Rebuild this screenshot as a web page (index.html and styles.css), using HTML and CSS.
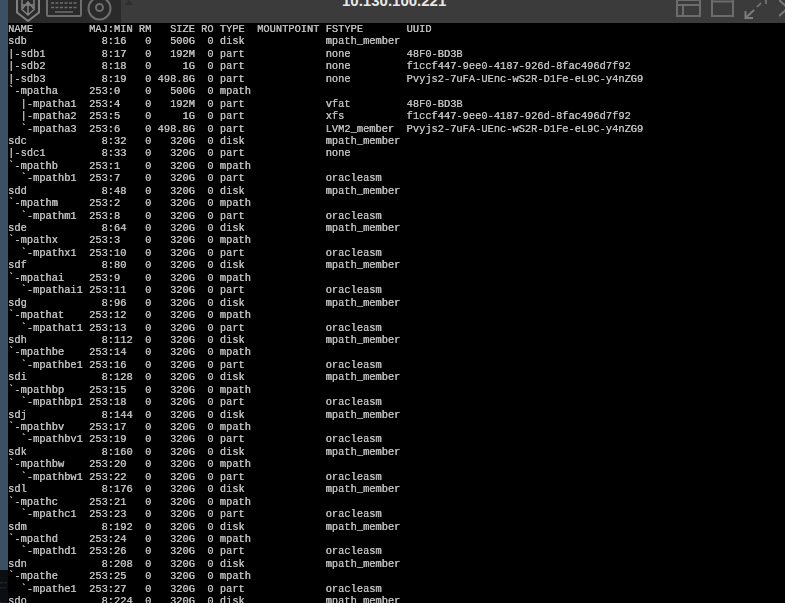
FILE: index.html
```html
<!DOCTYPE html>
<html lang="en">
<head>
<meta charset="utf-8">
<title>10.130.100.221</title>
<link rel="stylesheet" href="styles.css">
</head>
<body>
<div class="desktop">
  <aside class="strip">
    <div class="strip-fill"></div>
    <div class="strip-thumb"><span>::: ::</span><span>:: ::</span></div>
    <div class="strip-thumb"><span>:: ::</span></div>
  </aside>
  <main class="window">
    <header class="titlebar">
      <div class="tools">
        <svg class="icon" width="26" height="23" viewBox="0 0 26 23" fill="none" stroke="#808080" stroke-width="2"><path d="M2 -3V12.5L13 21L24 12.500V-3"/><path d="M7 -3V9.500L13 15L19 9.500V-3M7 9L13 2L19 9M7 5H19M13 2V15" stroke-width="1.500"/></svg>
        <svg class="icon" width="36" height="18" viewBox="0 0 36 18" fill="none" stroke="#6e6e6e"><rect x="1" y="-3" width="34" height="19" rx="1.500" stroke-width="2"/><path d="M5 3H31M5 7.500H31" stroke-dasharray="3 1.500" stroke-width="1.500"/><path d="M9 12H27" stroke-width="1.500"/></svg>
        <svg class="icon" width="25" height="23" viewBox="0 0 25 23" fill="none" stroke="#6e6e6e"><circle cx="12.500" cy="8.500" r="11" stroke-width="2"/><circle cx="12.500" cy="7.500" r="3.500" stroke-width="2"/></svg>
      </div>
      <div class="arrow"></div>
      <h1 class="title">10.130.100.221</h1>
      <div class="controls">
        <svg width="25" height="17" viewBox="0 0 25 17" fill="none" stroke="#6c6c6c" stroke-width="2"><path d="M1 -2V16H24V-2M1 5H24M7 5V16M1 0H24"/></svg>
        <svg width="23" height="17" viewBox="0 0 23 17" fill="none" stroke="#6c6c6c" stroke-width="2"><path d="M1 -2V16H22V-2M1 1.500H22"/></svg>
        <svg width="25" height="20" viewBox="0 0 25 20" fill="none" stroke="#7c7c7c" stroke-width="2"><path d="M1.500 18L10 10M1.500 11V18H9"/><path d="M13 7L17 3M20 0L22 -2M22 -1V4" stroke-width="1.500"/></svg>
        <svg width="12" height="20" viewBox="0 0 12 20" fill="none" stroke="#7c7c7c" stroke-width="2"><path d="M0 16L9 8M0 0L9 8"/></svg>
      </div>
    </header>
    <pre class="console">NAME         MAJ:MIN RM   SIZE RO TYPE  MOUNTPOINT FSTYPE       UUID
sdb            8:16   0   500G  0 disk             mpath_member
|-sdb1         8:17   0   192M  0 part             none         48F0-BD3B
|-sdb2         8:18   0     1G  0 part             none         f1ccf447-9ee0-4187-926d-8fac496d7f92
|-sdb3         8:19   0 498.8G  0 part             none         Pvyjs2-7uFA-UEnc-wS2R-D1Fe-eL9C-y4nZG9
`-mpatha     253:0    0   500G  0 mpath
  |-mpatha1  253:4    0   192M  0 part             vfat         48F0-BD3B
  |-mpatha2  253:5    0     1G  0 part             xfs          f1ccf447-9ee0-4187-926d-8fac496d7f92
  `-mpatha3  253:6    0 498.8G  0 part             LVM2_member  Pvyjs2-7uFA-UEnc-wS2R-D1Fe-eL9C-y4nZG9
sdc            8:32   0   320G  0 disk             mpath_member
|-sdc1         8:33   0   320G  0 part             none
`-mpathb     253:1    0   320G  0 mpath
  `-mpathb1  253:7    0   320G  0 part             oracleasm
sdd            8:48   0   320G  0 disk             mpath_member
`-mpathm     253:2    0   320G  0 mpath
  `-mpathm1  253:8    0   320G  0 part             oracleasm
sde            8:64   0   320G  0 disk             mpath_member
`-mpathx     253:3    0   320G  0 mpath
  `-mpathx1  253:10   0   320G  0 part             oracleasm
sdf            8:80   0   320G  0 disk             mpath_member
`-mpathai    253:9    0   320G  0 mpath
  `-mpathai1 253:11   0   320G  0 part             oracleasm
sdg            8:96   0   320G  0 disk             mpath_member
`-mpathat    253:12   0   320G  0 mpath
  `-mpathat1 253:13   0   320G  0 part             oracleasm
sdh            8:112  0   320G  0 disk             mpath_member
`-mpathbe    253:14   0   320G  0 mpath
  `-mpathbe1 253:16   0   320G  0 part             oracleasm
sdi            8:128  0   320G  0 disk             mpath_member
`-mpathbp    253:15   0   320G  0 mpath
  `-mpathbp1 253:18   0   320G  0 part             oracleasm
sdj            8:144  0   320G  0 disk             mpath_member
`-mpathbv    253:17   0   320G  0 mpath
  `-mpathbv1 253:19   0   320G  0 part             oracleasm
sdk            8:160  0   320G  0 disk             mpath_member
`-mpathbw    253:20   0   320G  0 mpath
  `-mpathbw1 253:22   0   320G  0 part             oracleasm
sdl            8:176  0   320G  0 disk             mpath_member
`-mpathc     253:21   0   320G  0 mpath
  `-mpathc1  253:23   0   320G  0 part             oracleasm
sdm            8:192  0   320G  0 disk             mpath_member
`-mpathd     253:24   0   320G  0 mpath
  `-mpathd1  253:26   0   320G  0 part             oracleasm
sdn            8:208  0   320G  0 disk             mpath_member
`-mpathe     253:25   0   320G  0 mpath
  `-mpathe1  253:27   0   320G  0 part             oracleasm
sdo            8:224  0   320G  0 disk             mpath_member</pre>
  </main>
</div>
</body>
</html>
```
FILE: styles.css
```css
html, body {
  margin: 0;
  height: 100%;
  background: #000;
  overflow: hidden;
}

.desktop {
  display: flex;
  height: 603px;
  overflow: hidden;
}

.strip {
  width: 8px;
  flex: none;
  display: flex;
  flex-direction: column;
  background: #0c0f12;
  overflow: hidden;
}

.strip-fill {
  height: 570px;
  background: #3b5062;
  flex: none;
}

.strip-thumb {
  display: flex;
  flex-direction: column;
  margin-top: 10px;
  font: 4px/5px "Liberation Sans", sans-serif;
  color: #8d9aa5;
  white-space: nowrap;
}

.window {
  flex: 1;
  min-width: 0;
  display: flex;
  flex-direction: column;
  background: #000;
}

.titlebar {
  height: 23px;
  flex: none;
  display: flex;
  align-items: flex-start;
  position: relative;
  overflow: hidden;
  background: #3b3b3b;
}

.tools {
  width: 113px;
  height: 23px;
  box-sizing: border-box;
  padding-left: 7px;
  display: flex;
  gap: 5px;
  flex: none;
  background: #2a2a2a;
}

.arrow {
  width: 0;
  height: 0;
  margin: 0 0 0 4px;
  border-left: 4px solid transparent;
  border-right: 4px solid transparent;
  border-bottom: 5px solid #2e2e2e;
}

.title {
  position: absolute;
  left: 334px;
  top: -8px;
  margin: 0;
  font: bold 15px/18px "Liberation Sans", sans-serif;
  color: #e8e8e8;
  white-space: nowrap;
}

.controls {
  margin-left: auto;
  display: flex;
  gap: 10px;
  margin-right: -6px;
}

.console {
  margin: 0;
  padding: 0;
  flex: 1;
  overflow: hidden;
  background: #000;
  color: #bcbcbc;
  font-family: "Liberation Mono", monospace;
  font-size: 10.38px;
  line-height: 12.43px;
  text-shadow: 0.35px 0 0 #bcbcbc;
  filter: blur(0.3px);
}
```
